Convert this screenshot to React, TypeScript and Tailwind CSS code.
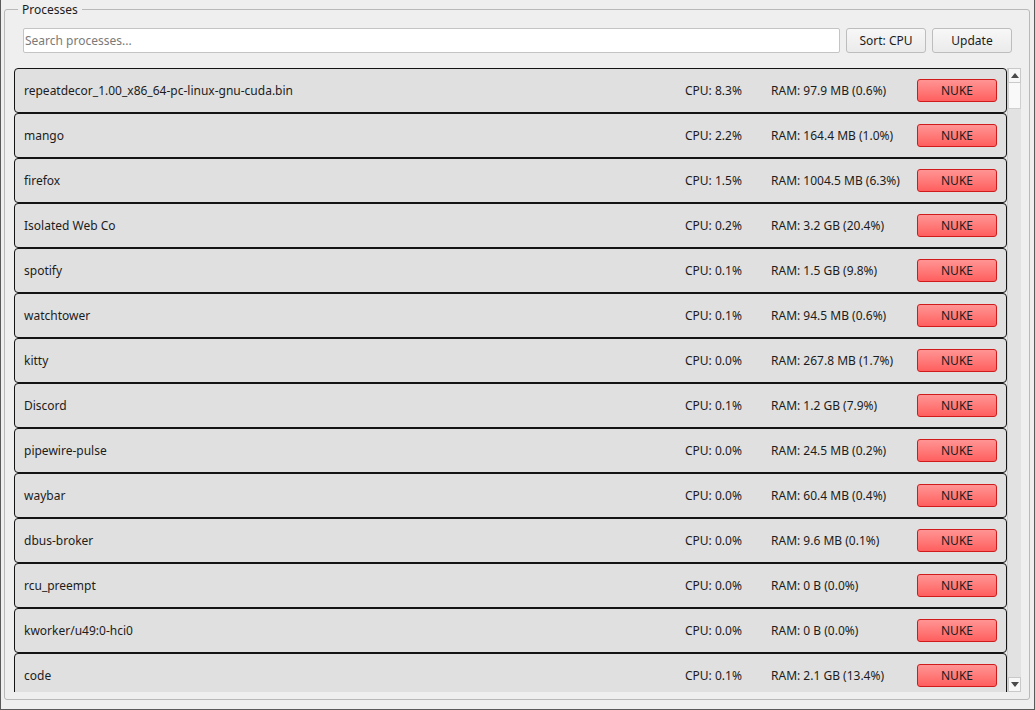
import React from "react";

const rows = [
  ["repeatdecor_1.00_x86_64-pc-linux-gnu-cuda.bin", "8.3%", "97.9 MB (0.6%)"],
  ["mango", "2.2%", "164.4 MB (1.0%)"],
  ["firefox", "1.5%", "1004.5 MB (6.3%)"],
  ["Isolated Web Co", "0.2%", "3.2 GB (20.4%)"],
  ["spotify", "0.1%", "1.5 GB (9.8%)"],
  ["watchtower", "0.1%", "94.5 MB (0.6%)"],
  ["kitty", "0.0%", "267.8 MB (1.7%)"],
  ["Discord", "0.1%", "1.2 GB (7.9%)"],
  ["pipewire-pulse", "0.0%", "24.5 MB (0.2%)"],
  ["waybar", "0.0%", "60.4 MB (0.4%)"],
  ["dbus-broker", "0.0%", "9.6 MB (0.1%)"],
  ["rcu_preempt", "0.0%", "0 B (0.0%)"],
  ["kworker/u49:0-hci0", "0.0%", "0 B (0.0%)"],
  ["code", "0.1%", "2.1 GB (13.4%)"],
];

export default function App() {
  return (
    <div className="flex flex-col w-[1035px] h-[710px] overflow-hidden bg-[#efefef] border-x border-b border-[#5a5a5a] pl-[3px] pr-[4px] pt-[9px] pb-[9px] text-[12px] text-[#1c1c1c] font-['Noto_Sans',sans-serif]">
      <div className="relative flex-1 min-h-0 flex flex-col border border-[#b9b9b9] rounded-[3px] pl-[9px] pr-[8px] pb-[7px] pt-[18px]">
        <div className="absolute left-[13px] top-[-9px] px-[4px] bg-[#efefef] leading-[18px]">Processes</div>
        <div className="flex items-center gap-[6px] pl-[9px] pr-[9px] h-[25px] shrink-0">
          <div className="flex-1 h-[25px] bg-white border border-[#c4c4c4] rounded-[2px] flex items-center pl-[1px] text-[#7a7a7a]">
            Search processes...
          </div>
          <button className="w-[80px] h-[25px] rounded-[3px] border border-[#bdbdbd] bg-gradient-to-b from-[#f7f7f7] to-[#ebebeb] text-[#1c1c1c]">
            Sort: CPU
          </button>
          <button className="w-[80px] h-[25px] rounded-[3px] border border-[#bdbdbd] bg-gradient-to-b from-[#f7f7f7] to-[#ebebeb] text-[#1c1c1c]">
            Update
          </button>
        </div>
        <div className="mt-[15px] flex-1 min-h-0 flex overflow-hidden">
          <div className="flex-1 min-h-0 flex flex-col overflow-hidden">
            {rows.map(([name, cpu, ram]) => (
              <div
                key={name}
                className="shrink-0 h-[45px] flex items-center border border-[#141414] rounded-[4px] bg-[#e0e0e0] pl-[9px] pr-[9px]"
              >
                <div className="flex-1">{name}</div>
                <div className="w-[86px]">CPU: {cpu}</div>
                <div className="w-[146px]">RAM: {ram}</div>
                <button className="w-[80px] h-[23px] rounded-[3px] border border-[#cf1b1b] bg-gradient-to-b from-[#ff9494] to-[#ff5e5e] text-[#1c1c1c]">
                  NUKE
                </button>
              </div>
            ))}
          </div>
          <div className="w-[14px] flex flex-col bg-[#e2e2e2] border-l border-[#cfcfcf]">
            <div className="h-[15px] bg-[#f7f7f7] border border-[#c9c9c9] flex items-center justify-center">
              <svg width="8" height="5" viewBox="0 0 8 5"><path d="M0 5 L4 0 L8 5 Z" fill="#4a4a4a" /></svg>
            </div>
            <div className="h-[26px] bg-[#f9f9f9] border-x border-b border-[#d0d0d0]" />
            <div className="flex-1" />
            <div className="h-[15px] bg-[#f7f7f7] border border-[#c9c9c9] flex items-center justify-center">
              <svg width="8" height="5" viewBox="0 0 8 5"><path d="M0 0 L8 0 L4 5 Z" fill="#4a4a4a" /></svg>
            </div>
          </div>
        </div>
      </div>
    </div>
  );
}
